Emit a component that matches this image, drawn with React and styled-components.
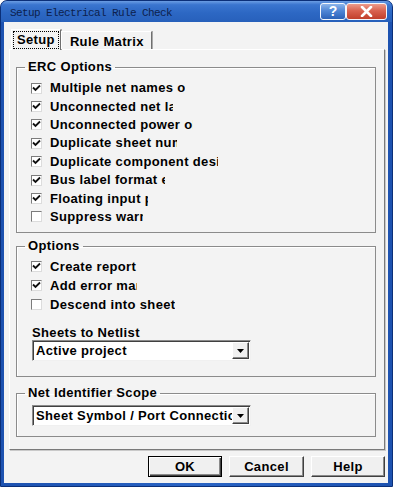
import styled, { createGlobalStyle } from 'styled-components';

const GlobalStyle = createGlobalStyle`
    html, body {
        margin: 0;
        padding: 0;
        background: #ffffff;
    }
    * {
        box-sizing: border-box;
    }
`;

const Janela = styled.div`
    width: 393px;
    height: 487px;
    display: flex;
    flex-direction: column;
    background: linear-gradient(to right, #1d52b0, #2a64c4 50%, #1d52b0);
    border: 1px solid #0b2f78;
    border-radius: 7px 7px 0 0;
    overflow: hidden;
    font-family: "Liberation Sans", Arial, sans-serif;
`;

const BarraTitulo = styled.div`
    height: 21px;
    display: flex;
    align-items: center;
    padding: 0 5px 0 9px;
    background: linear-gradient(to bottom, #6b9de3 0%, #3a75cf 18%, #2d68c4 55%, #2760bb 100%);
`;

const Titulo = styled.span`
    flex: 1;
    font-family: "Liberation Mono", "Courier New", monospace;
    font-size: 11px;
    letter-spacing: -0.6px;
    color: #0d1f4c;
    padding-top: 2px;
`;

const BotaoTitulo = styled.div`
    width: ${({ $largura }) => $largura}px;
    height: 17px;
    margin-top: -1px;
    display: flex;
    align-items: center;
    justify-content: center;
    border: 1px solid #f4f7fc;
    border-radius: 3px;
    background: ${({ $fechar }) => $fechar
        ? 'linear-gradient(to bottom, #ec9c8c 0%, #d9624f 45%, #c2402c 100%)'
        : 'linear-gradient(to bottom, #8db5ea 0%, #4f86d6 45%, #2c62b8 100%)'};
    color: #fff;
    font-weight: bold;
    font-size: 14px;
    line-height: 1;
`;

const Cliente = styled.div`
    flex: 1;
    margin: 0 4px 3px 3px;
    background: #f3f3f3;
    display: flex;
    flex-direction: column;
    letter-spacing: 0.35px;
`;

const LinhaAbas = styled.div`
    display: flex;
    align-items: flex-end;
    height: 20px;
    margin: 7px 0 0 7px;
    position: relative;
    z-index: 1;
`;

const Aba = styled.div`
    height: ${({ $ativa }) => ($ativa ? 21 : 18)}px;
    margin-bottom: ${({ $ativa }) => ($ativa ? -1 : 0)}px;
    padding: ${({ $ativa }) => ($ativa ? '1px 1px 0 1px' : '1px 3px 0 4px')};
    background: #f3f3f3;
    border-top: 1px solid #ffffff;
    border-left: 1px solid #ffffff;
    border-right: 1px solid #6f6f6f;
    box-shadow: 1px 0 0 #a9a9a9;
    font-size: 13px;
    font-weight: bold;
    color: #000;
    display: flex;
    align-items: flex-start;
`;

const RotuloAba = styled.span`
    display: block;
    padding: 1px 4px 2px 4px;
    line-height: 15px;
    outline: ${({ $foco }) => ($foco ? '1px dotted #000' : 'none')};
    outline-offset: -1px;
`;

const Painel = styled.div`
    width: 376px;
    height: 401px;
    margin-left: 5px;
    padding: 9px 0 0 6px;
    border-top: 1px solid #ffffff;
    border-left: 1px solid #ffffff;
    border-right: 1px solid #7a7a7a;
    border-bottom: 1px solid #7a7a7a;
    box-shadow: 1px 1px 0 #c9c9c9;
    display: flex;
    flex-direction: column;
`;

const Grupo = styled.fieldset`
    width: 360px;
    margin: ${({ $topo }) => $topo || 0}px 0 0 0;
    padding: ${({ $pt }) => $pt}px 0 ${({ $pb }) => $pb}px 15px;
    border: 1px solid #8b8b8b;
    box-shadow: inset 1px 1px 0 #ffffff;
    min-width: 0;

    legend {
        margin-left: -7px;
        padding: 0 3px;
        font-size: 13px;
        font-weight: bold;
        line-height: 16px;
        color: #000;
    }
`;

const LinhaOpcao = styled.div`
    height: ${({ $altura }) => $altura}px;
    display: flex;
    align-items: center;
    margin-left: -1px;
`;

const Caixa = styled.span`
    width: 11px;
    height: 11px;
    flex: none;
    background: #ffffff;
    border: 1px solid;
    border-color: #7c7c7c #dcdcdc #dcdcdc #7c7c7c;
    display: flex;
    align-items: center;
    justify-content: center;
`;

const TextoOpcao = styled.span`
    width: ${({ $largura }) => $largura}px;
    margin-left: 8px;
    overflow: hidden;
    white-space: nowrap;
    font-size: 13px;
    font-weight: bold;
    color: #000;
    line-height: 16px;
`;

const Rotulo = styled.div`
    margin-top: 12px;
    font-size: 13px;
    font-weight: bold;
    line-height: 14px;
    color: #000;
`;

const Combo = styled.div`
    width: 219px;
    height: 21px;
    display: flex;
    background: #ffffff;
    border: 1px solid;
    border-color: #8a8a8a #f0f0f0 #f0f0f0 #8a8a8a;
    box-shadow: inset 1px 1px 0 #404040;
    padding: 1px 1px 1px 2px;
`;

const ValorCombo = styled.span`
    flex: 1;
    overflow: hidden;
    white-space: nowrap;
    font-size: 13px;
    font-weight: bold;
    line-height: 17px;
    padding-left: 1px;
    color: #000;
`;

const SetaCombo = styled.span`
    width: 17px;
    height: 17px;
    flex: none;
    background: #f0f0f0;
    border: 1px solid;
    border-color: #ffffff #404040 #404040 #ffffff;
    box-shadow: inset -1px -1px 0 #8a8a8a;
    display: flex;
    align-items: center;
    justify-content: center;
`;

const Rodape = styled.div`
    display: flex;
    justify-content: flex-end;
    gap: 7px;
    margin: 6px 3px 0 0;
`;

const Botao = styled.button`
    width: ${({ $largura }) => $largura}px;
    height: 21px;
    padding: 0;
    background: #f0f0f0;
    border: 1px solid;
    border-color: ${({ $padrao }) => ($padrao ? '#000' : '#ffffff #404040 #404040 #ffffff')};
    box-shadow: ${({ $padrao }) => ($padrao
        ? 'inset 1px 1px 0 #ffffff, inset -1px -1px 0 #404040, inset -2px -2px 0 #8a8a8a'
        : 'inset -1px -1px 0 #8a8a8a')};
    font-family: "Liberation Sans", Arial, sans-serif;
    font-size: 13px;
    font-weight: bold;
    letter-spacing: 0.35px;
    color: #000;
`;

const Marca = () => (
    <svg width="9" height="9" viewBox="0 0 9 9">
        <path d="M1 3.5 L3.5 6 L8 1.5" fill="none" stroke="#111" strokeWidth="1.8" />
    </svg>
);

const Seta = () => (
    <svg width="7" height="4" viewBox="0 0 7 4">
        <path d="M0 0 H7 L3.5 4 Z" fill="#000" />
    </svg>
);

function Opcao({ texto, largura, marcado, altura }) {
    return (
        <LinhaOpcao $altura={altura}>
            <Caixa>{marcado && <Marca />}</Caixa>
            <TextoOpcao $largura={largura}>{texto}</TextoOpcao>
        </LinhaOpcao>
    );
}

const opcoesErc = [
    ['Multiple net names on net', 135, true],
    ['Unconnected net labels', 123, true],
    ['Unconnected power objects', 143, true],
    ['Duplicate sheet numbers', 127, true],
    ['Duplicate component designators', 168, true],
    ['Bus label format errors', 115, true],
    ['Floating input pins', 98, true],
    ['Suppress warnings', 93, false],
];

const opcoes = [
    ['Create report file', 89, true],
    ['Add error markers', 87, true],
    ['Descend into sheet parts', 125, false],
];

export default function App() {
    return (
        <>
            <GlobalStyle />
            <Janela>
                <BarraTitulo>
                    <Titulo>Setup Electrical Rule Check</Titulo>
                    <BotaoTitulo $largura={26}>?</BotaoTitulo>
                    <BotaoTitulo $largura={41} $fechar>
                        <svg width="13" height="11" viewBox="0 0 13 11">
                            <path d="M2 1 L11 10 M11 1 L2 10" stroke="#fff" strokeWidth="2.6" strokeLinecap="round" />
                        </svg>
                    </BotaoTitulo>
                </BarraTitulo>
                <Cliente>
                    <LinhaAbas>
                        <Aba $ativa><RotuloAba $foco>Setup</RotuloAba></Aba>
                        <Aba><RotuloAba>Rule Matrix</RotuloAba></Aba>
                    </LinhaAbas>
                    <Painel>
                        <Grupo $pt={4} $pb={6}>
                            <legend>ERC Options</legend>
                            {opcoesErc.map(([t, l, m]) => (
                                <Opcao key={t} texto={t} largura={l} marcado={m} altura={18.4} />
                            ))}
                        </Grupo>
                        <Grupo $topo={5} $pt={3} $pb={15}>
                            <legend>Options</legend>
                            {opcoes.map(([t, l, m]) => (
                                <Opcao key={t} texto={t} largura={l} marcado={m} altura={19} />
                            ))}
                            <Rotulo>Sheets to Netlist</Rotulo>
                            <Combo>
                                <ValorCombo>Active project</ValorCombo>
                                <SetaCombo><Seta /></SetaCombo>
                            </Combo>
                        </Grupo>
                        <Grupo $topo={8} $pt={4} $pb={10}>
                            <legend>Net Identifier Scope</legend>
                            <Combo>
                                <ValorCombo>Sheet Symbol / Port Connections</ValorCombo>
                                <SetaCombo><Seta /></SetaCombo>
                            </Combo>
                        </Grupo>
                    </Painel>
                    <Rodape>
                        <Botao $largura={74} $padrao>OK</Botao>
                        <Botao $largura={75}>Cancel</Botao>
                        <Botao $largura={74}>Help</Botao>
                    </Rodape>
                </Cliente>
            </Janela>
        </>
    );
}
